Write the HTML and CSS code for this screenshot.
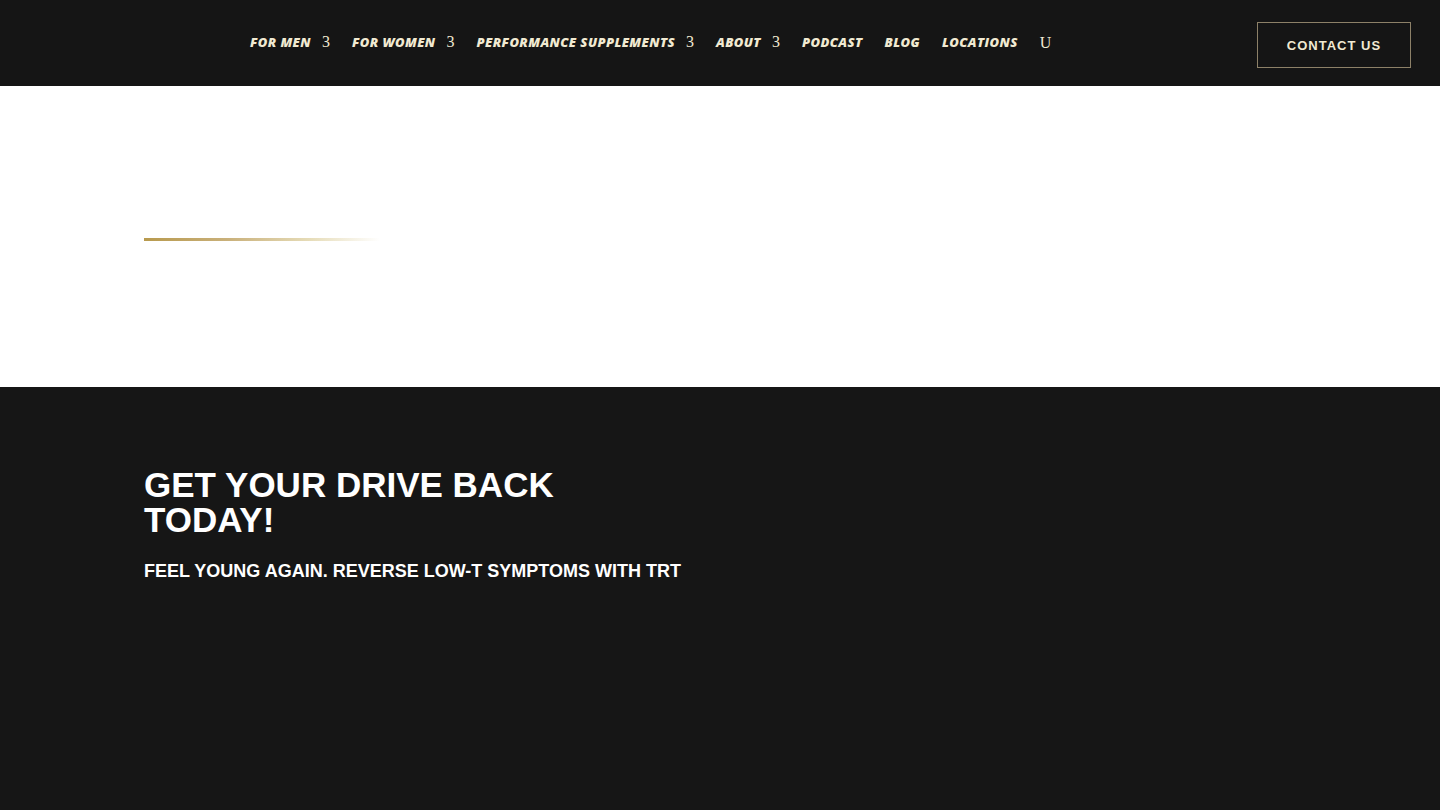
FILE: index.html
```html
<!DOCTYPE html>
<html lang="en">
<head>
    <meta charset="UTF-8">
    <meta name="viewport" content="width=device-width, initial-scale=1.0">
    <title>Get Your Drive Back</title>
    <link rel="stylesheet" href="styles.css">
</head>
<body>
    <header class="site-header">
        <nav class="main-nav">
            <a href="#" class="nav-link">For Men <span class="nav-arrow">3</span></a>
            <a href="#" class="nav-link">For Women <span class="nav-arrow">3</span></a>
            <a href="#" class="nav-link">Performance Supplements <span class="nav-arrow">3</span></a>
            <a href="#" class="nav-link">About <span class="nav-arrow">3</span></a>
            <a href="#" class="nav-link">Podcast</a>
            <a href="#" class="nav-link">Blog</a>
            <a href="#" class="nav-link">Locations</a>
            <span class="nav-search">U</span>
        </nav>
        <a href="#" class="contact-btn">Contact Us</a>
    </header>

    <section class="intro">
        <div class="gold-rule"></div>
    </section>

    <section class="cta">
        <h1 class="cta-title">Get Your Drive Back Today!</h1>
        <p class="cta-sub">Feel young again. Reverse Low-T symptoms with TRT</p>
    </section>
</body>
</html>
```

FILE: styles.css
```css
body {
    margin: 0;
    font-family: 'Liberation Sans', Arial, sans-serif;
    background-color: #161616;
}

.site-header {
    height: 86px;
    background-color: #151515;
    display: flex;
    align-items: center;
    justify-content: space-between;
    padding: 0 29px 0 250px;
    box-sizing: border-box;
}

.main-nav {
    display: flex;
    align-items: center;
    gap: 22px;
    margin-top: -2px;
}

.nav-link {
    font-family: 'Open Sans', sans-serif;
    font-weight: 800;
    font-style: italic;
    font-size: 13px;
    text-transform: uppercase;
    color: #f1ead2;
    text-decoration: none;
    letter-spacing: 0.4px;
    display: flex;
    align-items: center;
    gap: 11px;
}

.nav-arrow,
.nav-search {
    font-family: 'Liberation Serif', serif;
    font-style: normal;
    font-weight: 400;
    font-size: 16px;
    letter-spacing: 0;
    color: #f1ead2;
}

.nav-search {
    margin-top: 1px;
}

.contact-btn {
    display: flex;
    align-items: center;
    justify-content: center;
    width: 154px;
    height: 46px;
    margin-top: 4px;
    box-sizing: border-box;
    border: 1px solid #8d8168;
    color: #f1ead2;
    text-decoration: none;
    text-transform: uppercase;
    font-weight: bold;
    font-size: 13px;
    letter-spacing: 1px;
}

.intro {
    height: 301px;
    background-color: #ffffff;
    padding: 152px 0 0 144px;
    box-sizing: border-box;
}

.gold-rule {
    width: 236px;
    height: 3px;
    background: linear-gradient(to right, #b89a4e 0%, #c9b07a 35%, #e6dcb8 70%, rgba(255, 255, 255, 0) 100%);
}

.cta {
    padding: 80px 144px 0;
    height: 423px;
    box-sizing: border-box;
    color: #ffffff;
}

.cta-title {
    margin: 0;
    max-width: 480px;
    font-size: 35px;
    line-height: 35px;
    font-weight: bold;
    text-transform: uppercase;
}

.cta-sub {
    margin: 24px 0 0;
    font-size: 18px;
    font-weight: bold;
    text-transform: uppercase;
}
```
